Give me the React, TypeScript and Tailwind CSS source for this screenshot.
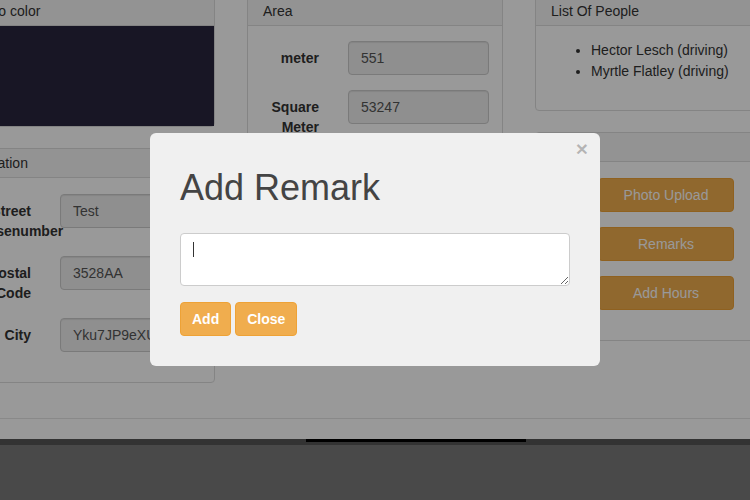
import React from 'react';

const font = { fontFamily: '"Liberation Sans", Arial, sans-serif' };

function Panel({ title, children, last }: { title: string; children: React.ReactNode; last?: boolean }) {
  return (
    <div className={`border border-[#dddddd] rounded-[4px] bg-white ${last ? '' : 'mb-[21px]'}`}>
      <div className="h-[29px] flex items-center px-[15px] bg-[#f5f5f5] border-b border-[#dddddd] text-[14px] text-[#333333] rounded-t-[4px]">
        {title}
      </div>
      {children}
    </div>
  );
}

function Field({ label, value }: { label: string; value: string }) {
  return (
    <div className="flex items-start mb-[15px]">
      <label className="-ml-[6px] w-[62px] shrink-0 text-right pt-[7px] text-[14px] leading-[20px] font-bold text-[#333333]">
        {label}
      </label>
      <input
        readOnly
        value={value}
        className="ml-[29px] w-[141px] h-[34px] px-[12px] text-[14px] text-[#555555] bg-[#eeeeee] border border-[#cccccc] rounded-[4px] shadow-[inset_0_1px_1px_rgba(0,0,0,0.075)] outline-none"
      />
    </div>
  );
}

function ActionButton({ children }: { children: React.ReactNode }) {
  return (
    <button className="block ml-[62px] mb-[15px] w-[136px] h-[34px] bg-[#f0ad4e] border border-[#eea236] rounded-[4px] text-white text-[14px]">
      {children}
    </button>
  );
}

export default function App() {
  return (
    <div className="h-screen overflow-hidden bg-white" style={font}>
      <div className="flex items-start gap-[32px] ml-[-41px] mt-[-4px]">
        {/* column 1 */}
        <div className="w-[256px] shrink-0">
          <Panel title="Logo color">
            <div className="h-[100px] bg-[#29263f]" />
          </Panel>
          <Panel title="Location" last>
            <div className="px-[15px] pt-[16px] pb-[15px]">
              <Field label="Street Housenumber" value="Test" />
              <Field label="Postal Code" value="3528AA" />
              <Field label="City" value="Yku7JP9eXUa" />
            </div>
          </Panel>
        </div>

        {/* column 2 */}
        <div className="w-[256px] shrink-0">
          <Panel title="Area">
            <div className="px-[15px] pt-[15px] pb-[15px]">
              <Field label="meter" value="551" />
              <Field label="Square Meter" value="53247" />
            </div>
          </Panel>
        </div>

        {/* column 3 */}
        <div className="w-[256px] shrink-0">
          <Panel title="List Of People">
            <ul className="list-disc pl-[55px] pt-[14px] pb-[28px] text-[14px] leading-[21px] text-[#333333]">
              <li>Hector Lesch (driving)</li>
              <li>Myrtle Flatley (driving)</li>
            </ul>
          </Panel>
          <Panel title="Actions">
            <div className="pt-[16px] pb-[15px]">
              <ActionButton>Photo Upload</ActionButton>
              <ActionButton>Remarks</ActionButton>
              <ActionButton>Add Hours</ActionButton>
            </div>
          </Panel>
        </div>
      </div>

      <div className="mt-[35px] border-t border-[#e5e5e5] h-[21px]" />
      <div className="h-[80px] bg-[#7b7b7b] border-t-[6px] border-[#555555] relative">
        <div className="absolute top-[-6px] left-[306px] w-[220px] h-[3px] bg-black" />
      </div>

      {/* modal backdrop */}
      <div className="fixed inset-0 bg-black/40 z-10" />
      <div className="fixed inset-0 z-20 flex justify-center pt-[133px]">
        <div className="relative w-[450px] h-fit bg-[#f0f0f0] rounded-[6px] px-[30px] pt-[35px] pb-[30px]">
          <button className="absolute top-[6px] right-[12px] text-[21px] font-bold leading-[20px] text-black/25">
            ×
          </button>
          <h1 className="text-[36px] leading-[40px] text-[#444444]">Add Remark</h1>
          <div className="relative mt-[25px]">
            <textarea className="block w-full h-[53px] bg-white border border-[#cccccc] rounded-[4px] px-[12px] py-[6px] text-[14px] outline-none" />
            <span className="absolute left-[13px] top-[9px] w-px h-[15px] bg-[#333333]" />
          </div>
          <div className="flex gap-[4px] mt-[16px]">
            <button className="h-[34px] px-[11px] bg-[#f0ad4e] border border-[#eea236] rounded-[4px] text-white text-[14px] font-bold">
              Add
            </button>
            <button className="h-[34px] px-[11px] bg-[#f0ad4e] border border-[#eea236] rounded-[4px] text-white text-[14px] font-bold">
              Close
            </button>
          </div>
        </div>
      </div>
    </div>
  );
}
